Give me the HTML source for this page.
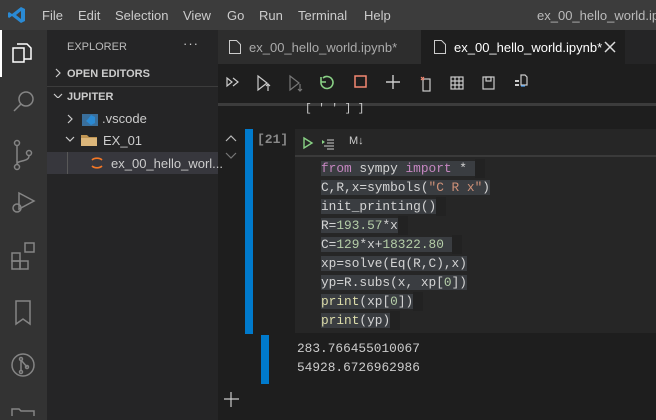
<!DOCTYPE html>
<html><head><style>
*{margin:0;padding:0;box-sizing:border-box}
body{width:656px;height:420px;overflow:hidden;background:#1e1e1e;font-family:"Liberation Sans",sans-serif;position:relative;color:#ccc}
.a{position:absolute}
.menu span{position:absolute;top:8px;font-size:13px;color:#ccc}
.code{font-family:"Liberation Mono",monospace;font-size:12.8px;color:#d4d4d4}
.ln{position:absolute;left:321px;height:19px;line-height:19px;white-space:pre}
.ln b{font-weight:normal;background:#3a3d41}
.ln i{font-style:normal;display:inline-block;width:10px;height:19px;background:#222;vertical-align:top}
.k{color:#c586c0}.s{color:#ce9178}.n{color:#b5cea8}.f{color:#dcdcaa}
</style></head><body>
<div class="a" style="left:0;top:0;width:656px;height:30px;background:#3c3c3c"></div>
<svg class="a" style="left:8px;top:6px" width="18" height="18" viewBox="0 0 18 18"><path d="M13 1 L17 3 V15 L13 17 L4 10 L1 12 L0 11 V7 L1 6 L4 8 Z M13 5 L8 9 L13 13 Z" fill="#2a8ad4"/></svg>
<div class="menu"><span style="left:42px">File</span><span style="left:78px">Edit</span><span style="left:115px">Selection</span><span style="left:183px">View</span><span style="left:227px">Go</span><span style="left:259px">Run</span><span style="left:298px">Terminal</span><span style="left:364px">Help</span><span style="left:537px;color:#bbb">ex_00_hello_world.ipynb</span></div>
<div class="a" style="left:0;top:30px;width:47px;height:390px;background:#333"></div>
<div class="a" style="left:0;top:30px;width:2px;height:47px;background:#fff"></div>
<svg class="a" style="left:0;top:30px" width="47" height="390" fill="none" stroke="#858585" stroke-width="1.5">
<g stroke="#fff"><rect x="13" y="18" width="11" height="14"/><path d="M17 14h10l4 4v11h-7"/></g>
<circle cx="26" cy="69" r="7"/><path d="M21 74l-7 7"/>
<circle cx="17" cy="113" r="2.5"/><circle cx="29" cy="123" r="2.5"/><circle cx="17" cy="137" r="2.5"/><path d="M17 116v18M29 126c0 6-12 4-12 8"/>
<path d="M19 163l15 8-15 8z"/><circle cx="17" cy="178" r="4"/>
<rect x="12" y="231" width="8" height="8"/><rect x="20" y="231" width="8" height="8"/><rect x="12" y="223" width="8" height="8"/><rect x="25" y="213" width="9" height="9"/>
<path d="M16 271h14v23l-7-5-7 5z"/>
<circle cx="23" cy="335" r="11"/><circle cx="21" cy="329" r="1.5"/><circle cx="21" cy="342" r="1.5"/><circle cx="27" cy="337" r="1.5"/><path d="M21 330v11M21 330l6 7"/>
<path d="M12 386v-7h7l2 2h13v5"/>
</svg>
<div class="a" style="left:47px;top:30px;width:171px;height:390px;background:#252526"></div>
<div class="a" style="left:67px;top:41px;font-size:11px;color:#bbb">EXPLORER</div>
<div class="a" style="left:183px;top:36px;font-size:13px;color:#ccc;letter-spacing:1px">···</div>
<svg class="a" style="left:52px;top:68px" width="12" height="30" fill="none" stroke="#ccc" stroke-width="1.2"><path d="M4 2l4 4-4 4M2 27l4 4 4-4" transform="translate(0,-1)"/></svg>
<div class="a" style="left:67px;top:68px;font-size:11px;font-weight:bold;color:#ccc">OPEN EDITORS</div>
<div class="a" style="left:47px;top:86px;width:171px;height:1px;background:#3c3c3c"></div>
<div class="a" style="left:67px;top:91px;font-size:11px;font-weight:bold;color:#ccc">JUPITER</div>
<svg class="a" style="left:64px;top:112px" width="12" height="40" fill="none" stroke="#ccc" stroke-width="1.2"><path d="M4 3l4 4-4 4M2 25l4 4 4-4"/></svg>
<svg class="a" style="left:82px;top:112px" width="16" height="14"><rect x="0" y="2" width="16" height="12" fill="#3a6f9c"/><path d="M9 3l4 2v6l-4 2-5-4 2-2z" fill="#2a8ad4"/></svg>
<div class="a" style="left:102px;top:111px;font-size:13px;color:#ccc">.vscode</div>
<svg class="a" style="left:81px;top:134px" width="16" height="12"><path d="M0 1h6l2 2h8v9H0z" fill="#c09553"/><path d="M0 4h16v8H0z" fill="#dcb67a"/></svg>
<div class="a" style="left:103px;top:133px;font-size:13px;color:#ccc">EX_01</div>
<div class="a" style="left:47px;top:152px;width:171px;height:22px;background:#37373d"></div>
<div class="a" style="left:67px;top:152px;width:1px;height:22px;background:#585858"></div>
<svg class="a" style="left:90px;top:155px" width="14" height="16" fill="none" stroke="#f37726" stroke-width="1.6"><path d="M2 5a6 4 0 0 1 10 0M2 11a6 4 0 0 0 10 0"/></svg>
<div class="a" style="left:111px;top:156px;font-size:13px;color:#ccc">ex_00_hello_worl...</div>
<div class="a" style="left:218px;top:30px;width:438px;height:34px;background:#252526"></div>
<div class="a" style="left:218px;top:30px;width:203px;height:34px;background:#2d2d2d"></div>
<div class="a" style="left:421px;top:30px;width:204px;height:34px;background:#1e1e1e"></div>
<svg class="a" style="left:229px;top:40px" width="12" height="14" fill="none" stroke="#ccc"><path d="M.5.5h7l4 4v9H.5z"/></svg>
<div class="a" style="left:249px;top:40px;font-size:13px;color:#aaa">ex_00_hello_world.ipynb*</div>
<svg class="a" style="left:434px;top:40px" width="12" height="14" fill="none" stroke="#ccc"><path d="M.5.5h7l4 4v9H.5z"/></svg>
<div class="a" style="left:454px;top:40px;font-size:13px;color:#fff">ex_00_hello_world.ipynb*</div>
<svg class="a" style="left:604px;top:41px" width="12" height="12" stroke="#ddd" stroke-width="1.5"><path d="M1 1l10 10M11 1L1 11"/></svg>
<svg class="a" style="left:218px;top:64px" width="438" height="40" fill="none" stroke="#ccc" stroke-width="1.2">
<path d="M9 14l5 4-5 4zM15 14l5 4-5 4"/>
<path d="M40 12l9 7-9 7z"/><path d="M50 20v7M48 22l2-2 2 2"/>
<g stroke="#777"><path d="M72 12l9 7-9 7z"/><path d="M82 20v7M80 25l2 2 2-2"/></g>
<path d="M105 14a6 6 0 1 1-2 4M103 13v5h5" stroke="#89d185" stroke-width="1.6"/>
<rect x="137" y="12" width="11" height="11" stroke="#f48771" stroke-width="1.5"/>
<path d="M175 11v14M168 18h14" stroke-width="1.4"/>
<rect x="205" y="15" width="7" height="12"/><path d="M203 13l3 3M206 13l-3 3" stroke="#f48771"/>
<rect x="233" y="13" width="12" height="12"/><path d="M233 17h12M233 21h12M237 13v12M241 13v12"/>
<rect x="265" y="13" width="11" height="12"/><rect x="268" y="13" width="5" height="4"/>
<path d="M297 17h4M297 21h4" stroke-width="2"/><path d="M303 11h4l2 2v8h-6z" stroke="#ccc"/><path d="M303 22h4" stroke="#4fa7ff"/>
</svg>
<div class="a" style="left:218px;top:103px;width:438px;height:3px;background:#3c3c3c"></div>
<div class="a code" style="left:305px;top:103px;font-size:11px;color:#ccc">[ ' ' ] ]</div>
<svg class="a" style="left:224px;top:134px" width="14" height="26" fill="none" stroke-width="1.2"><path d="M2 7l5-5 5 5" stroke="#bbb"/><path d="M2 19l5 5 5-5" stroke="#777"/></svg>
<div class="a" style="left:245px;top:129px;width:8px;height:205px;background:#007acc"></div>
<div class="a code" style="left:257px;top:132px;font-size:13px;color:#888;font-weight:bold">[21]</div>
<div class="a" style="left:295px;top:129px;width:361px;height:204px;background:#262626"></div>
<div class="a" style="left:295px;top:155px;width:361px;height:2px;background:#3a3a3a"></div>
<svg class="a" style="left:300px;top:135px" width="70" height="16" fill="none"><path d="M4 3l8 5-8 5z" stroke="#89d185" stroke-width="1.4"/><path d="M22 5l3 2-3 2z" fill="#89d185"/><path d="M27 5h7M27 8h7M24 11h10M27 14h7" stroke="#ccc"/></svg>
<div class="a" style="left:349px;top:135px;font-size:11px;color:#ccc">M↓</div>
<div class="code">
<div class="ln" style="top:159px"><b><span class="k">from</span> sympy <span class="k">import</span> * </b><i></i></div>
<div class="ln" style="top:178px"><b>C,R,x=symbols(<span class="s">"C R x"</span>)</b></div>
<div class="ln" style="top:197px"><b>init_printing()</b><i></i></div>
<div class="ln" style="top:216px"><b>R=<span class="n">193.57</span>*x</b><i></i></div>
<div class="ln" style="top:235px"><b>C=<span class="n">129</span>*x+<span class="n">18322.80</span> </b><i></i></div>
<div class="ln" style="top:254px"><b>xp=solve(Eq(R,C),x)</b></div>
<div class="ln" style="top:273px"><b>yp=R.subs(x, xp[<span class="n">0</span>])</b></div>
<div class="ln" style="top:292px"><b><span class="f">print</span>(xp[<span class="n">0</span>])</b><i></i></div>
<div class="ln" style="top:311px"><b><span class="f">print</span>(yp)</b><i></i></div>
</div>
<div class="a" style="left:261px;top:335px;width:8px;height:49px;background:#007acc"></div>
<div class="a code" style="left:297px;top:339px;line-height:19px;font-size:12.8px;color:#ccc">283.766455010067<br>54928.6726962986</div>
<svg class="a" style="left:223px;top:391px" width="18" height="18" stroke="#ccc" stroke-width="1.2"><path d="M8 1v15M1 8h15"/></svg>
</body></html>
